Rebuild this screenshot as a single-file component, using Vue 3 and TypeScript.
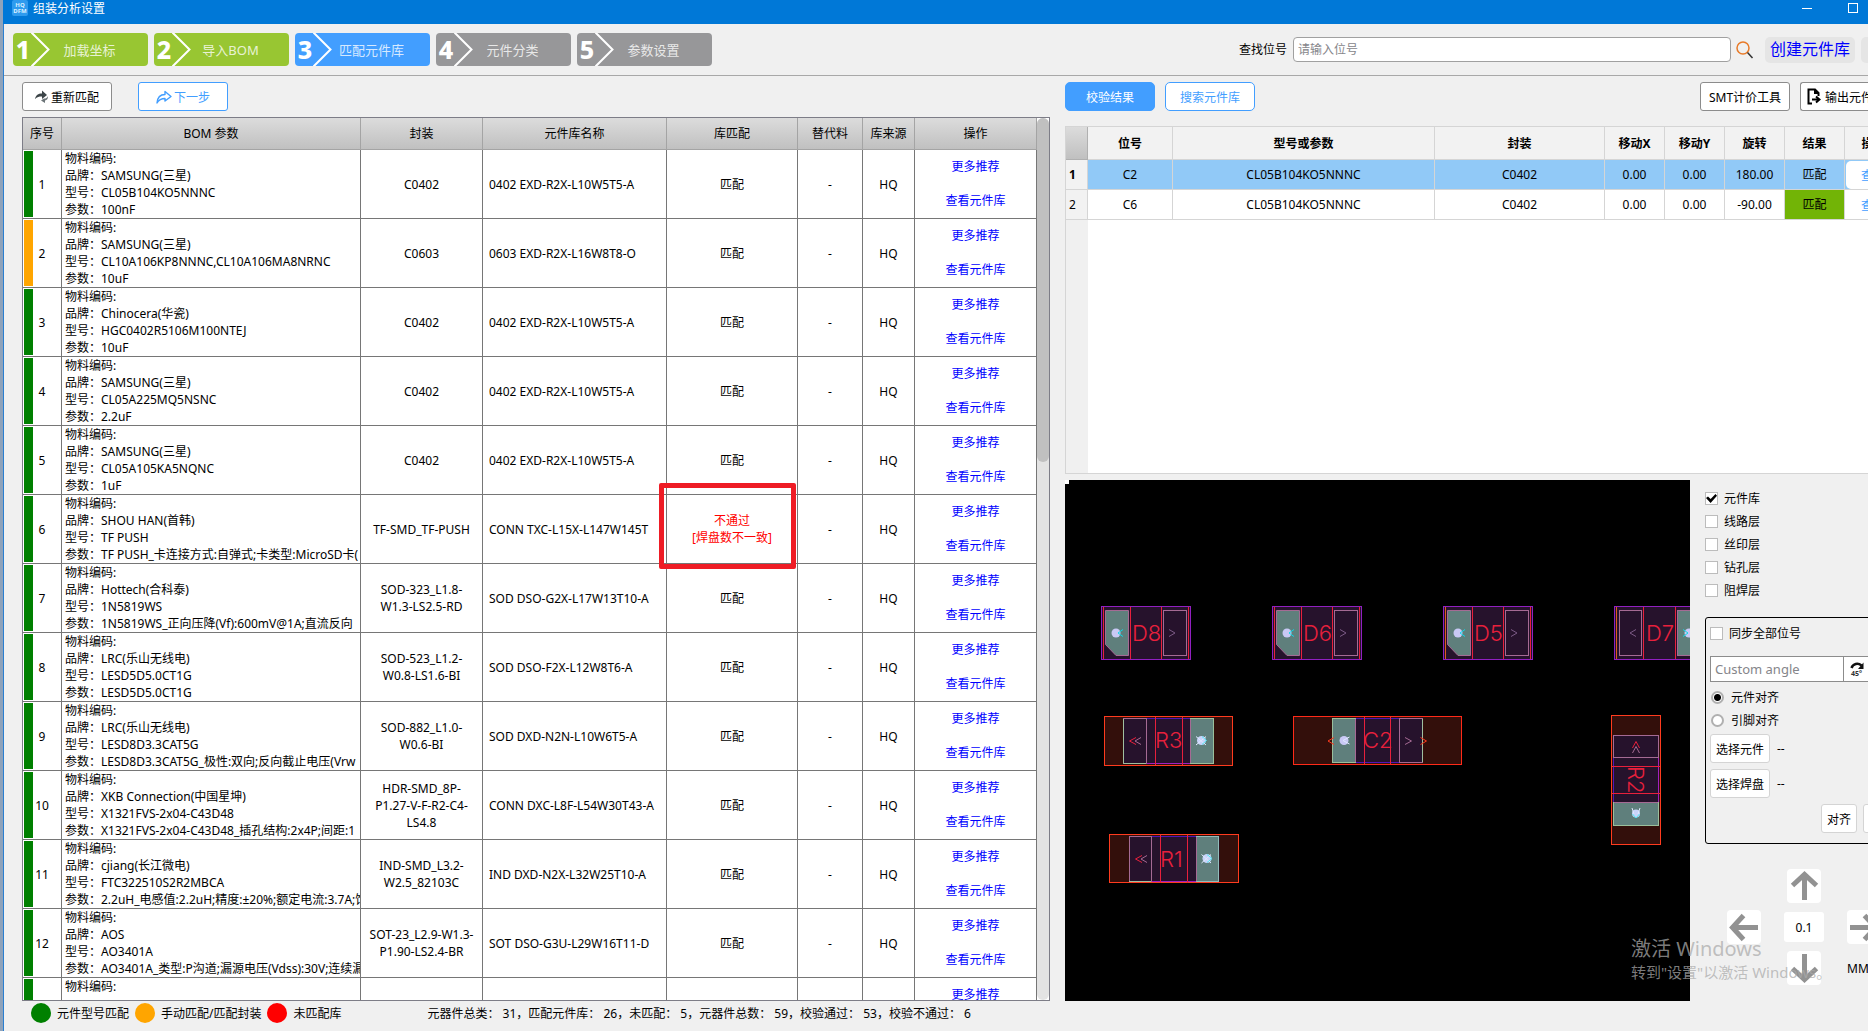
<script setup lang="ts">
import { ref } from 'vue'

interface Step { label: string; state: 'done' | 'active' | 'todo' }
interface BomRow {
  brand: string
  model: string
  param: string
  pkg: string
  lib: string
  manual?: boolean
  fail?: boolean
}
interface PlacementRow { ref: string; model: string; pkg: string; angle: string }

const steps: Step[] = [
  { label: '加载坐标', state: 'done' },
  { label: '导入BOM', state: 'done' },
  { label: '匹配元件库', state: 'active' },
  { label: '元件分类', state: 'todo' },
  { label: '参数设置', state: 'todo' },
]

const rows: BomRow[] = [
  { brand: 'SAMSUNG(三星)', model: 'CL05B104KO5NNNC', param: '100nF', pkg: 'C0402', lib: '0402 EXD-R2X-L10W5T5-A' },
  { brand: 'SAMSUNG(三星)', model: 'CL10A106KP8NNNC,CL10A106MA8NRNC', param: '10uF', pkg: 'C0603', lib: '0603 EXD-R2X-L16W8T8-O', manual: true },
  { brand: 'Chinocera(华瓷)', model: 'HGC0402R5106M100NTEJ', param: '10uF', pkg: 'C0402', lib: '0402 EXD-R2X-L10W5T5-A' },
  { brand: 'SAMSUNG(三星)', model: 'CL05A225MQ5NSNC', param: '2.2uF', pkg: 'C0402', lib: '0402 EXD-R2X-L10W5T5-A' },
  { brand: 'SAMSUNG(三星)', model: 'CL05A105KA5NQNC', param: '1uF', pkg: 'C0402', lib: '0402 EXD-R2X-L10W5T5-A' },
  { brand: 'SHOU HAN(首韩)', model: 'TF PUSH', param: 'TF PUSH_卡连接方式:自弹式;卡类型:MicroSD卡(', pkg: 'TF-SMD_TF-PUSH', lib: 'CONN TXC-L15X-L147W145T', fail: true },
  { brand: 'Hottech(合科泰)', model: '1N5819WS', param: '1N5819WS_正向压降(Vf):600mV@1A;直流反向', pkg: 'SOD-323_L1.8-\nW1.3-LS2.5-RD', lib: 'SOD DSO-G2X-L17W13T10-A' },
  { brand: 'LRC(乐山无线电)', model: 'LESD5D5.0CT1G', param: 'LESD5D5.0CT1G', pkg: 'SOD-523_L1.2-\nW0.8-LS1.6-BI', lib: 'SOD DSO-F2X-L12W8T6-A' },
  { brand: 'LRC(乐山无线电)', model: 'LESD8D3.3CAT5G', param: 'LESD8D3.3CAT5G_极性:双向;反向截止电压(Vrw', pkg: 'SOD-882_L1.0-\nW0.6-BI', lib: 'SOD DXD-N2N-L10W6T5-A' },
  { brand: 'XKB Connection(中国星坤)', model: 'X1321FVS-2x04-C43D48', param: 'X1321FVS-2x04-C43D48_插孔结构:2x4P;间距:1', pkg: 'HDR-SMD_8P-\nP1.27-V-F-R2-C4-\nLS4.8', lib: 'CONN DXC-L8F-L54W30T43-A' },
  { brand: 'cjiang(长江微电)', model: 'FTC322510S2R2MBCA', param: '2.2uH_电感值:2.2uH;精度:±20%;额定电流:3.7A;饱', pkg: 'IND-SMD_L3.2-\nW2.5_82103C', lib: 'IND DXD-N2X-L32W25T10-A' },
  { brand: 'AOS', model: 'AO3401A', param: 'AO3401A_类型:P沟道;漏源电压(Vdss):30V;连续漏', pkg: 'SOT-23_L2.9-W1.3-\nP1.90-LS2.4-BR', lib: 'SOT DSO-G3U-L29W16T11-D' },
  { brand: '', model: '', param: '', pkg: '', lib: '' },
]

const placements: PlacementRow[] = [
  { ref: 'C2', model: 'CL05B104KO5NNNC', pkg: 'C0402', angle: '180.00' },
  { ref: 'C6', model: 'CL05B104KO5NNNC', pkg: 'C0402', angle: '-90.00' },
]

const diodes = [
  { name: 'D8', x: 36, edge: '#e8203c' },
  { name: 'D6', x: 207, edge: '#e8203c' },
  { name: 'D5', x: 378, edge: '#e05a20' },
]

const layers = ref([
  { name: '元件库', on: true },
  { name: '线路层', on: false },
  { name: '丝印层', on: false },
  { name: '钻孔层', on: false },
  { name: '阻焊层', on: false },
])
const keyword = ref('')
const angle = ref('')
const syncAll = ref(false)
const alignMode = ref('part')
</script>

<template>
  <div class="app">
    <header class="titlebar">
      <svg class="logo" width="16" height="16" viewBox="0 0 16 16">
        <rect width="16" height="16" rx="2" fill="#2f9bee" />
        <text x="8" y="7" text-anchor="middle" font-size="6" font-weight="700" fill="#d8f0ff">HQ</text>
        <text x="8" y="13" text-anchor="middle" font-size="6" font-weight="700" fill="#d8f0ff">DFM</text>
      </svg>
      <span>组装分析设置</span>
      <div class="win-ctl">
        <button aria-label="最小化"><svg width="12" height="16"><path d="M1 8.5h10" stroke="#fff" /></svg></button>
        <button aria-label="最大化"><svg width="12" height="16"><rect x="1.5" y="3.5" width="9" height="9" fill="none" stroke="#fff" /></svg></button>
      </div>
    </header>

    <div class="body">
      <nav class="toolbar">
        <div class="steps">
          <button v-for="(s, i) in steps" :key="s.label" class="step" :class="s.state">
            <span class="num">{{ i + 1 }}</span>
            <svg width="20" height="33" viewBox="0 0 20 33"><path d="M0 -1L17.500 16.500L0 34" fill="none" stroke="#fff" stroke-width="2" /></svg>
            <span class="step-label">{{ s.label }}</span>
          </button>
        </div>
        <div class="search">
          <label for="find">查找位号</label>
          <input id="find" v-model="keyword" type="text" placeholder="请输入位号" />
          <button class="icon-btn" aria-label="查找">
            <svg width="18" height="18" viewBox="0 0 18 18">
              <circle cx="7" cy="7" r="6" fill="none" stroke="#e87a28" stroke-width="1.500" />
              <path d="M11.500 11.500L16.500 17" stroke="#333" stroke-width="1.500" />
            </svg>
          </button>
          <button class="create">创建元件库</button>
          <button class="create" aria-label="更多"></button>
        </div>
      </nav>

      <main class="main">
        <section class="left">
          <div class="actions left-actions">
            <button class="btn">
              <svg width="14" height="14" viewBox="0 0 14 14">
                <path d="M0 9C1 5 3 3.500 7 3.500V0.500L12 5L7 9V6.500C4 6.500 2 7 0 9Z" fill="#3c4448" />
                <path d="M13 6c0 3-1 4-3 4.500V13L6 10.500L9 8.500C11 8.500 12 8 13 6Z" fill="#6c7478" />
              </svg>重新匹配
            </button>
            <button class="btn blue">
              <svg width="16" height="14" viewBox="0 0 16 14">
                <path d="M1 13C1.500 7 4 4.500 9 4.500V1.500L15 6.500L9 11V8.500C5.500 8.500 3 9.500 1 13Z" fill="none" stroke="#429eff" stroke-width="1.400" stroke-linejoin="round" />
              </svg>下一步
            </button>
          </div>
          <div class="bom-frame">
            <div class="bom-view">
              <table class="bom">
                <colgroup>
                  <col class="w-no" /><col class="w-bom" /><col class="w-pkg" /><col class="w-lib" />
                  <col class="w-match" /><col class="w-alt" /><col class="w-src" /><col class="w-op" />
                </colgroup>
                <thead>
                  <tr>
                    <th>序号</th><th>BOM 参数</th><th>封装</th><th>元件库名称</th>
                    <th>库匹配</th><th>替代料</th><th>库来源</th><th>操作</th>
                  </tr>
                </thead>
                <tbody>
                  <tr v-for="(r, i) in rows" :key="i">
                    <td class="no" :class="{ manual: r.manual }"><span v-if="r.brand">{{ i + 1 }}</span></td>
                    <td class="info">
                      <div>物料编码:</div>
                      <template v-if="r.brand">
                        <div>品牌：{{ r.brand }}</div>
                        <div>型号：{{ r.model }}</div>
                        <div>参数：{{ r.param }}</div>
                      </template>
                    </td>
                    <td class="pkg">{{ r.pkg }}</td>
                    <td class="lib"><div>{{ r.lib }}</div></td>
                    <td class="match" :class="{ fail: r.fail }">
                      <template v-if="r.fail">不通过<br />[焊盘数不一致]<i class="mark"></i></template>
                      <template v-else-if="r.brand">匹配</template>
                    </td>
                    <td>{{ r.brand ? '-' : '' }}</td>
                    <td>{{ r.brand ? 'HQ' : '' }}</td>
                    <td class="op"><a href="#">更多推荐</a><a v-if="r.brand" href="#">查看元件库</a></td>
                  </tr>
                </tbody>
              </table>
            </div>
            <div class="scroll"><div class="thumb"></div></div>
          </div>
        </section>

        <section class="right">
          <div class="actions right-actions">
            <button class="tab on">校验结果</button>
            <button class="tab">搜索元件库</button>
            <span class="grow"></span>
            <button class="btn">SMT计价工具</button>
            <button class="btn export">
              <svg width="14" height="17" viewBox="0 0 14 17">
                <path d="M5 15.500H1.500V1.500H8L11.500 5V8M8 1.500V5H11.500" fill="none" stroke="#000" stroke-width="2" />
                <path d="M5 11.500H11M9 8.500L12.500 11.500L9 14.500" fill="none" stroke="#000" stroke-width="2" />
              </svg>输出元件
            </button>
          </div>

          <div class="check-view">
            <table class="check">
              <colgroup>
                <col class="c-h" /><col class="c-ref" /><col class="c-model" /><col class="c-pkg" />
                <col class="c-n" /><col class="c-n" /><col class="c-n" /><col class="c-n" /><col class="c-op" />
              </colgroup>
              <thead>
                <tr>
                  <th class="corner"></th><th>位号</th><th>型号或参数</th><th>封装</th>
                  <th>移动X</th><th>移动Y</th><th>旋转</th><th>结果</th><th>操作</th>
                </tr>
              </thead>
              <tbody>
                <tr v-for="(p, i) in placements" :key="p.ref" :class="{ sel: i === 0 }">
                  <th class="rowhead">{{ i + 1 }}</th>
                  <td>{{ p.ref }}</td><td>{{ p.model }}</td><td>{{ p.pkg }}</td>
                  <td>0.00</td><td>0.00</td><td>{{ p.angle }}</td>
                  <td class="result">匹配</td>
                  <td class="view-cell"><button class="view">查看</button></td>
                </tr>
              </tbody>
            </table>
          </div>

          <div class="lower">
            <div class="canvas">
              <svg width="100%" height="100%" class="board">
                <rect x="0" y="0" width="4" height="4" fill="#fff" />
                <g v-for="d in diodes" :key="d.name" :transform="`translate(${d.x} 126)`">
                  <rect x="0.5" y="0.5" width="89" height="53" fill="#26122c" stroke="#9020c0" />
                  <path d="M29.500 1v52M60.500 1v52M87.500 1v52" stroke="#e8203c" />
                  <path d="M2.500 1v52" :stroke="d.edge" />
                  <path d="M4.500 4.500H27.500V49.500H15L4.500 38.500Z" fill="#5f7f7c" stroke="#a56a94" />
                  <rect x="62.500" y="4.500" width="23" height="45" fill="none" stroke="#a56a94" />
                  <circle cx="15" cy="27" r="4.500" fill="#c9c9f5" />
                  <path d="M22 23.500L17 27L22 30.500" class="line" stroke="#10d8e8" />
                  <path d="M68 23.500L74 27L68 30.500" class="line" stroke="#7c5a86" />
                  <text x="31" y="35">{{ d.name }}</text>
                </g>
                <g transform="translate(549 126)">
                  <rect x="0.5" y="0.5" width="89" height="53" fill="#26122c" stroke="#9020c0" />
                  <path d="M2.500 1v52" stroke="#e05a20" />
                  <path d="M29.500 1v52M61.500 1v52" stroke="#e8203c" />
                  <rect x="5.500" y="4.500" width="22" height="45" fill="none" stroke="#a56a94" />
                  <rect x="63.500" y="4.500" width="23" height="45" fill="#5f7f7c" stroke="#a56a94" />
                  <circle cx="75" cy="27" r="4.500" fill="#c9c9f5" />
                  <path d="M69 23.500L74 27L69 30.500" class="line" stroke="#10d8e8" />
                  <path d="M22 23.500L16 27L22 30.500" class="line" stroke="#7c5a86" />
                  <text x="32" y="35">D7</text>
                </g>

                <g transform="translate(39 236)">
                  <rect x="0.5" y="0.5" width="128" height="49" fill="#330f0b" stroke="#ff3b1e" />
                  <rect x="19.500" y="2.500" width="90" height="45" fill="#26122c" />
                  <path d="M43 2.500H86" stroke="#5016b8" /><path d="M43 47.500H86" stroke="#a020c0" />
                  <rect x="19.500" y="2.500" width="23" height="45" fill="none" stroke="#a56a94" />
                  <path d="M42 47.500H19.500V3" fill="none" stroke="#a0bfa0" />
                  <rect x="86.500" y="2.500" width="23" height="45" fill="#5f7f7c" stroke="#9abf9c" />
                  <path d="M86.500 3v44" stroke="#a56a94" />
                  <path d="M51.500 1v48M78.500 1v48" stroke="#e8203c" />
                  <path d="M32 21.500L25.500 25L32 28.500" class="line" stroke="#e8203c" />
                  <path d="M37 21.500L31 25L37 28.500" class="line" stroke="#a56a94" />
                  <circle cx="97.500" cy="24.500" r="4.500" fill="#c9d4fa" />
                  <path d="M92 20.500L102 29M92 29L102 20.500" class="line" stroke="#e0e8ff" />
                  <path d="M98 20.500L102.500 24.500L98 28.500" class="line" stroke="#50e8f4" />
                  <text x="51" y="32">R3</text>
                </g>
                <g transform="translate(44 354)">
                  <rect x="0.5" y="0.5" width="129" height="48" fill="#330f0b" stroke="#ff3b1e" />
                  <rect x="20.500" y="2.500" width="90" height="45" fill="#26122c" />
                  <path d="M43 2.500H87" stroke="#5016b8" /><path d="M43 47.500H87" stroke="#a020c0" />
                  <rect x="20.500" y="2.500" width="22" height="45" fill="none" stroke="#a56a94" />
                  <path d="M20 47.500H42" stroke="#a0bfa0" />
                  <rect x="87.500" y="2.500" width="22" height="45" fill="#5f7f7c" stroke="#8fbcbc" />
                  <path d="M87.500 3v44" stroke="#a56a94" />
                  <path d="M51.500 1v48M78.500 1v48" stroke="#e8203c" />
                  <path d="M33 21.500L26.500 25L33 28.500" class="line" stroke="#e8203c" />
                  <path d="M38 21.500L32 25L38 28.500" class="line" stroke="#a56a94" />
                  <circle cx="98" cy="24.500" r="4.500" fill="#c9d4fa" />
                  <path d="M92.500 20.500L102 29M92.500 29L102 20.500" class="line" stroke="#e0e8ff" />
                  <path d="M98 20.500L103 24.500L98 28.500" class="line" stroke="#50e8f4" />
                  <text x="51" y="33">R1</text>
                </g>
                <g transform="translate(228 236)">
                  <rect x="0.5" y="0.5" width="168" height="48" fill="#330f0b" stroke="#ff2a18" />
                  <rect x="39.500" y="2.500" width="90" height="44" fill="#26122c" />
                  <path d="M63 2.500H106M63 46.500H106" stroke="#5016b8" />
                  <rect x="39.500" y="2.500" width="23" height="44" fill="#5f7f7c" stroke="#9abf9c" />
                  <path d="M62.500 3v43" stroke="#a56a94" />
                  <rect x="106.500" y="2.500" width="23" height="44" fill="none" stroke="#a56a94" />
                  <path d="M129.500 3v43" stroke="#a0bfa0" />
                  <path d="M71.500 1v47M97.500 1v47" stroke="#e8203c" />
                  <path d="M41 21.500L35 25L41 28.500M127.500 21.500L133.500 25L127.500 28.500" class="line" stroke="#ff3b1e" />
                  <path d="M112 21.500L118.500 25L112 28.500" class="line" stroke="#a56a94" />
                  <circle cx="51" cy="24.500" r="4.500" fill="#c9c9f5" />
                  <path d="M56.500 21L50 24.500L56.500 28" class="line" stroke="#e0e8ff" />
                  <text x="70" y="32">C2</text>
                </g>
                <g transform="translate(546 235)">
                  <rect x="0.5" y="0.5" width="49" height="129" fill="#330f0b" stroke="#ff3b1e" />
                  <rect x="2.500" y="20.500" width="45" height="90" fill="#26122c" />
                  <path d="M2.500 43v44" stroke="#5016b8" /><path d="M47.500 43v44" stroke="#a020c0" />
                  <rect x="2.500" y="20.500" width="45" height="22" fill="none" stroke="#a56a94" />
                  <rect x="2.500" y="87.500" width="45" height="23" fill="#5f7f7c" stroke="#9abf9c" />
                  <path d="M3 87.500H47" stroke="#a56a94" />
                  <path d="M1 51.500H49M1 78.500H49" stroke="#e8203c" />
                  <path d="M21.500 33L25 26.500L28.500 33" class="line" stroke="#e8203c" />
                  <path d="M21.500 38L25 31.500L28.500 38" class="line" stroke="#a56a94" />
                  <circle cx="25" cy="98.500" r="4" fill="#c9d4fa" />
                  <path d="M21 93l2 6M29 93l-2 6" class="line" stroke="#e0e8ff" />
                  <path d="M21.500 99L25 103L28.500 99" class="line" stroke="#50e8f4" />
                  <text transform="translate(17 51) rotate(90)">R2</text>
                </g>
              </svg>
            </div>

            <aside class="side">
              <div class="layers">
                <label v-for="l in layers" :key="l.name" class="opt"><input v-model="l.on" type="checkbox" />{{ l.name }}</label>
              </div>
              <div class="group">
                <label class="opt"><input v-model="syncAll" type="checkbox" />同步全部位号</label>
                <div class="angle">
                  <input v-model="angle" type="text" placeholder="Custom angle" aria-label="Custom angle" />
                  <button aria-label="旋转45°">
                    <svg width="18" height="16" viewBox="0 0 18 16">
                      <path d="M1.500 7C3 2.500 8 1.500 11.500 4.500" fill="none" stroke="#111" stroke-width="2.500" />
                      <path d="M13.500 1.500V8H8Z" fill="#111" />
                      <text x="1" y="15" font-size="7" font-weight="700" fill="#333">45°</text>
                    </svg>
                  </button>
                </div>
                <label class="opt radio"><input v-model="alignMode" type="radio" value="part" />元件对齐</label>
                <label class="opt radio"><input v-model="alignMode" type="radio" value="pin" />引脚对齐</label>
                <div class="pick"><button class="flat">选择元件</button><span>--</span></div>
                <div class="pick"><button class="flat">选择焊盘</button><span>--</span></div>
                <div class="align"><button class="flat">对齐</button><button class="flat" aria-label="撤销"></button></div>
              </div>
              <div class="pad">
                <button class="arrow up" aria-label="上移"><svg width="34" height="34"><path d="M17.500 31V6M5.500 16.500L17.500 5.500L29.500 16.500" /></svg></button>
                <button class="arrow lf" aria-label="左移"><svg width="34" height="34"><path d="M31 17.500H6M16.500 5.500L5.500 17.500L16.500 29.500" /></svg></button>
                <input class="dist" type="text" value="0.1" aria-label="步进" />
                <button class="arrow rt" aria-label="右移"><svg width="34" height="34"><path d="M3 17.500H28M17.500 5.500L28.500 17.500L17.500 29.500" /></svg></button>
                <button class="arrow dn" aria-label="下移"><svg width="34" height="34"><path d="M17.500 3V28M5.500 17.500L17.500 28.500L29.500 17.500" /></svg></button>
                <span class="unit">MM</span>
              </div>
            </aside>
          </div>
        </section>
      </main>

      <footer class="status">
        <i class="dot green"></i><span>元件型号匹配</span>
        <i class="dot orange"></i><span>手动匹配/匹配封装</span>
        <i class="dot red"></i><span>未匹配库</span>
        <span class="stats">元器件总类： 31，匹配元件库： 26，未匹配： 5，元器件总数： 59，校验通过： 53，校验不通过： 6</span>
      </footer>
    </div>

    <div class="watermark"><div class="wm1">激活 Windows</div><div>转到"设置"以激活 Windows。</div></div>
  </div>
</template>

<style>
body { margin: 0; overflow: hidden; }
</style>

<style scoped>
.app, .app button, .app input {
  font-family: "Noto Sans", "Noto Sans CJK SC", sans-serif;
  font-size: 12px;
  color: #000;
}
.app * { box-sizing: border-box; }
.app {
  position: relative;
  display: flex;
  flex-direction: column;
  height: 100vh;
  overflow: hidden;
  box-sizing: border-box;
  background: #f0f0f0;
  border-left: 3px solid #8fa3bb;
  line-height: 17px;
}
button { padding: 0; margin: 0; cursor: pointer; white-space: nowrap; flex: none; }
svg { display: block; flex: none; }

.titlebar {
  display: flex;
  flex: none;
  gap: 5px;
  height: 24px;
  padding-left: 9px;
  background: #0078d7;
}
.titlebar span { color: #fff; }
.win-ctl { display: flex; gap: 34px; margin-left: auto; padding-right: 9px; align-items: flex-start; }
.win-ctl button { border: 0; background: none; }

.body { display: flex; flex-direction: column; flex: 1; min-height: 0; border-left: 1px solid #2a7fd0; }
.toolbar {
  display: flex;
  flex: none;
  align-items: center;
  justify-content: space-between;
  height: 52px;
  padding-left: 9px;
  border-bottom: 1px solid #a8a8a8;
}
.steps { display: flex; gap: 6px; }
.step {
  display: flex;
  align-items: center;
  width: 135px;
  height: 33px;
  border: 0;
  border-radius: 4px;
  overflow: hidden;
}
.step.done { background: #98c632; }
.step.active { background: #429eff; }
.step.todo { background: #979799; }
.step .num { width: 16px; margin-left: 2px; text-align: center; font-size: 25px; font-weight: 800; line-height: 33px; color: #fff; }
.step .step-label { flex: 1; padding-right: 20px; text-align: center; font-size: 13px; color: rgba(255, 255, 255, 0.8); }

.search { display: flex; align-items: center; width: 629px; flex: none; overflow: hidden; }
.search input { width: 438px; height: 25px; margin-left: 6px; padding: 0 4px; border: 1px solid #a0a0a0; border-radius: 4px; background: #fff; flex: none; }
input::placeholder { color: #85858a; opacity: 1; }
.search label { flex: none; }
.icon-btn { border: 0; background: none; margin: 0 11px 0 5px; }
.search .create { width: 90px; height: 26px; margin-right: 6px; padding-bottom: 2px; border: 0; border-radius: 5px; background: #e5e5e5; color: #00f; font-size: 16px; line-height: 24px; }

.main { display: flex; flex: 1; gap: 15px; min-height: 0; padding: 6px 0 0 18px; }
.left { display: flex; flex-direction: column; gap: 6px; flex: 1028 1 0; min-width: 0; }
.right { display: flex; flex-direction: column; flex: 803 1 0; min-width: 0; overflow: hidden; }
.actions { display: flex; flex: none; height: 29px; }
.btn, .tab {
  display: flex;
  align-items: center;
  justify-content: center;
  width: 90px;
  height: 29px;
  border: 1px solid #8c8c8c;
  border-radius: 3px;
  background: #fff;
}
.left-actions { gap: 26px; }
.left-actions .btn { gap: 2px; }
.app .btn.blue { border-color: #429eff; color: #429eff; }
.tab { margin-right: 10px; border-radius: 5px; }
.app .tab { border-color: #429eff; color: #429eff; }
.app .tab.on { background: #429eff; color: #fff; }
.grow { flex: 1; }
.btn.export { justify-content: flex-start; width: 68px; margin-left: 10px; padding-left: 6px; gap: 4px; border-right: 0; border-radius: 3px 0 0 3px; overflow: hidden; }

.bom-frame { display: flex; flex: 1; min-height: 0; border: 1px solid #7d7d87; background: #fff; }
.bom-view { flex: 1; min-width: 0; overflow: hidden; }
.scroll { width: 12px; flex: none; background: #e3e3e3; border-radius: 6px; }
.thumb { height: 39%; background: #c0c0c0; border-radius: 6px; }
table { border-collapse: separate; border-spacing: 0; table-layout: fixed; }
.bom { width: 100%; }
.w-no { width: 39px; } .w-bom { width: 299px; } .w-pkg { width: 122px; } .w-lib { width: 184px; }
.w-match { width: 131px; } .w-alt { width: 65px; } .w-src { width: 52px; } .w-op { width: 122px; }
.bom th {
  height: 32px;
  padding: 0;
  font-weight: 400;
  background: linear-gradient(#dcdcdc, #c0c0c0);
  border-right: 1px solid #a4a4a4;
  border-bottom: 1px solid #a4a4a4;
}
.bom td {
  height: 69px;
  padding: 0;
  text-align: center;
  background: #fff;
  border-right: 1px solid #767676;
  border-bottom: 1px solid #767676;
}
.bom .no { background: linear-gradient(#008000, #008000) 1px 1px / 9px calc(100% - 2px) no-repeat #fff; background-clip: padding-box; }
.bom .no.manual { background: linear-gradient(#ffa500, #ffa500) 1px 1px / 9px calc(100% - 2px) no-repeat #fff; background-clip: padding-box; }
.bom .info { padding-left: 3px; text-align: left; vertical-align: top; overflow: hidden; white-space: nowrap; }
.bom .info div { height: 17px; }
.bom .pkg { white-space: pre-line; }
.bom .lib { padding: 0 7px 0 6px; text-align: left; white-space: nowrap; }
.lib div { overflow: hidden; }
.bom .match.fail { position: relative; color: #f00; }
.mark { position: absolute; inset: -12px 1px -6px -8px; border: 5px solid #ee1c25; border-radius: 2px; }
.bom .op { vertical-align: top; }
.op a { display: block; height: 34px; line-height: 34px; color: #00f; text-decoration: none; }

.check-view {
  flex: 346 1 0;
  min-height: 0;
  margin-top: 15px;
  border: 1px solid #d5d5d5;
  border-right: 0;
  background: linear-gradient(to right, #f0f0f0 22px, #fff 22px);
  overflow: hidden;
}
.check { width: 100%; min-width: 837px; }
.c-h { width: 22px; } .c-ref { width: 85px; } .c-model { width: 262px; } .c-pkg { width: 170px; }
.c-n { width: 60px; } .c-op { width: 58px; }
.check th, .check td { padding: 0; text-align: center; border-right: 1px solid #d5d5d5; border-bottom: 1px solid #d5d5d5; }
.check thead th { height: 33px; font-weight: 700; background: #f2f2f2; }
.check thead .corner { background: linear-gradient(#dcdcdc, #c0c0c0); border-color: #b0b0b0; }
.check tbody th, .check td { height: 30px; }
.check td { background: #fff; }
.check .rowhead { padding-left: 3px; text-align: left; font-weight: 400; background: #f2f2f2; }
.check .sel .rowhead { font-weight: 700; }
.check .sel td { background: #91c9f7; }
.check .result { background: #72b406; }
.view { display: block; width: 54px; height: 28px; margin: 0 1px; border: 0; border-radius: 5px; background: #fff; }
.app .view { color: #429eff; }

.lower { display: flex; flex: 521 1 0; min-height: 0; margin-top: 6px; }
.canvas { flex: 1; min-width: 0; background: #000; overflow: hidden; }
.board text { font-family: Inter, "Liberation Mono", monospace; font-size: 22px; font-weight: 300; fill: #e8203c; }
.line { fill: none; }

.side { width: 178px; flex: none; padding: 7px 0 0 15px; overflow: hidden; }
.opt { display: flex; align-items: center; gap: 6px; height: 23px; }
.opt input { appearance: none; width: 13px; height: 13px; margin: 0; border: 1px solid #bcbcbc; background: #fff; flex: none; }
.opt input[type="checkbox"]:checked::after {
  content: "";
  display: block;
  width: 11px;
  height: 11px;
  background: #000;
  clip-path: polygon(0 45%, 18% 32%, 42% 54%, 86% 8%, 100% 26%, 42% 92%);
}
.group { width: 240px; height: 227px; margin-top: 15px; padding: 4px; border: 1px solid #000; border-radius: 3px; }
.angle { display: flex; height: 26px; margin: 11px 0 4px; }
.app .angle input { width: 134px; padding: 0 4px; border: 1px solid #8c8c8c; background: #fff; font-size: 13px; }
.angle button { width: 60px; margin-left: -1px; padding-left: 6px; border: 1px solid #8c8c8c; background: #fff; }
.radio { padding-left: 1px; gap: 7px; }
.opt input[type="radio"] { border: 2px solid #b0b0b0; border-radius: 50%; }
.opt input[type="radio"]:checked { background: radial-gradient(circle, #000 0 3px, #fff 4px); }
.pick { display: flex; align-items: center; gap: 7px; height: 29px; margin: 2px 0 6px; }
.pick + .pick { margin: 6px 0; }
.flat { width: 60px; height: 29px; border: 1px solid #d4d4d4; border-radius: 3px; background: #fff; }
.align { display: flex; gap: 6px; padding-left: 111px; }
.align .flat { width: 36px; }
.pad {
  display: grid;
  grid-template-columns: 34px 40px 34px;
  grid-template-rows: repeat(3, 34px);
  gap: 7px 23px;
  justify-items: center;
  align-items: center;
  width: 156px;
  margin: 25px 0 0 22px;
}
.arrow { width: 34px; height: 34px; border: 0; border-radius: 4px; background: #fff; }
.arrow path { fill: none; stroke: #929292; stroke-width: 5; }
.up { grid-area: 1 / 2; } .lf { grid-area: 2 / 1; } .dist { grid-area: 2 / 2; } .rt { grid-area: 2 / 3; } .dn { grid-area: 3 / 2; }
.unit { grid-area: 3 / 3; justify-self: start; }
.dist { width: 40px; height: 30px; padding: 0; border: 0; border-radius: 3px; text-align: center; background: #fff; }

.status { display: flex; flex: none; align-items: center; height: 30px; padding: 0 0 6px 27px; white-space: nowrap; }
.dot { width: 20px; height: 20px; margin-right: 6px; border-radius: 50%; flex: none; }
.status .dot:not(:first-child) { margin-left: 6px; }
.green { background: #008000; } .orange { background: #ffa500; } .red { background: #f00; }
.stats { margin-left: 86px; }

.watermark { position: absolute; right: 42px; bottom: 48px; width: 195px; color: rgba(171, 171, 171, 0.74); font-size: 15px; line-height: 22px; white-space: nowrap; pointer-events: none; }
.wm1 { font-size: 20px; line-height: 24px; }
</style>
